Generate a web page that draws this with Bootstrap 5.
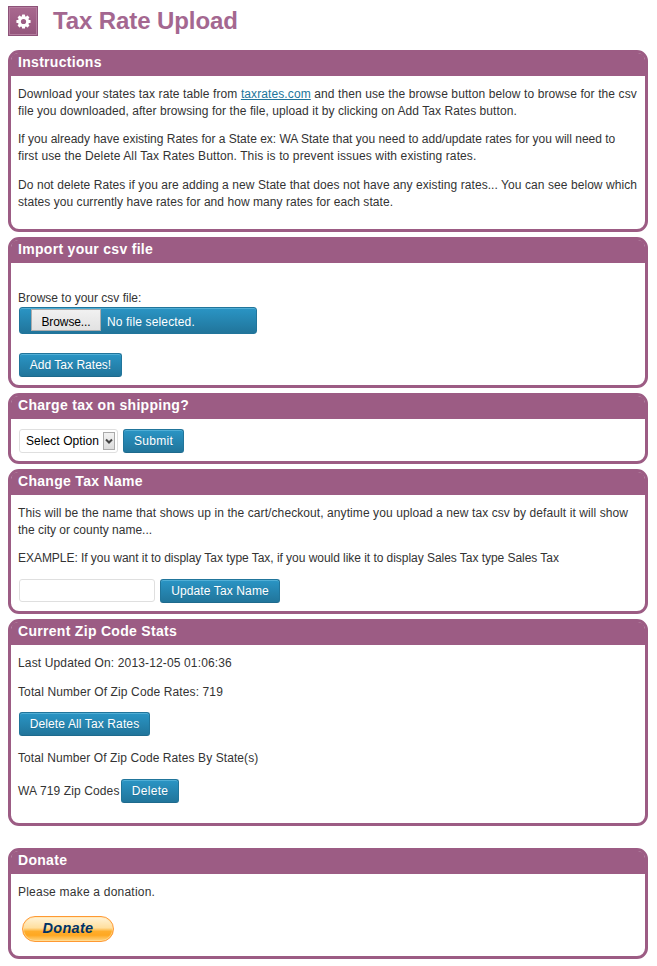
<!DOCTYPE html>
<html lang="en">
<head>
<meta charset="utf-8">
<title>Tax Rate Upload</title>
<link href="https://cdn.jsdelivr.net/npm/bootstrap@5.3.0/dist/css/bootstrap.min.css" rel="stylesheet">
<style>
body{font:12px/16.8px "Liberation Sans",Arial,sans-serif;color:#333;background:#fff}
.page-wrap{width:640px;margin-left:8px;padding-top:6px}
.title-bar{height:44px}
.gear-box{width:30px;height:30px;background:linear-gradient(#a9698f,#94557c);border:1px solid #8d5278;box-shadow:inset 0 0 0 1px #b57d9f}
.page-title{font-size:24px;line-height:30px;color:#a46790;font-weight:700;margin-left:15px;letter-spacing:-.1px}
.panel{border:3px solid #9c5c84;border-radius:11px;margin-bottom:5px;background:#fff}
.panel-title{background:#9c5c84;border-radius:7px 7px 0 0;color:#fff;font-size:14px;font-weight:700;line-height:17px;height:23px;margin:0;padding:1px 7px 0;letter-spacing:.3px}
.panel-content{padding:9.9px 0 0 7px}
.panel-content p{margin:0 0 12px;white-space:nowrap}
.panel-content a{color:#21759b}
.h-instructions{height:182px}.h-import{height:151px}.h-shipping{height:71px}.h-name{height:145px}.h-stats{height:207px;margin-bottom:22px}.h-donate{height:111px}
.ls-5{letter-spacing:.05px}.ls-7{letter-spacing:.07px}.ls-8{letter-spacing:.085px}.ls-10{letter-spacing:.1px}.ls-12{letter-spacing:.12px}.ls-14{letter-spacing:.14px}.ls-22{letter-spacing:.22px}.ls-tight{letter-spacing:-.043px}
.ms-px{margin-left:1px}
.btn-wp{height:24px;padding:0;font-size:12px;line-height:22px;letter-spacing:.12px;color:#fff;text-shadow:0 1px 0 rgba(0,0,0,.1);background:linear-gradient(#2a95c5,#21759b);border:1px solid #21759b;border-bottom-color:#1e6a8d;border-radius:3px;box-shadow:inset 0 1px 0 rgba(120,200,230,.5);white-space:nowrap}
.btn-wp:hover{color:#fff;border-color:#21759b}
.w-add{width:103px;letter-spacing:.02px}.w-submit{width:61px;letter-spacing:.3px}.w-update{width:120px}.w-all{width:131px}.w-delete{width:58px;letter-spacing:.3px}
.import-label{padding-top:27px;height:43px}
.file-box{width:238px;height:27px;margin:1px 0 19px 1px;padding-left:11px;color:#fff;background:linear-gradient(#2a95c5,#21759b);border:1px solid #21759b;border-radius:3px;box-shadow:inset 0 1px 0 rgba(120,200,230,.5)}
.file-btn{width:70px;height:22px;line-height:24px;text-align:center;color:#000;background:linear-gradient(#f1f1f1,#e2e2e2);border:1px solid #acacac;margin-top:-1px;letter-spacing:-.1px}
.file-name{margin:4px 0 0 6px;letter-spacing:.15px}
.pick{width:99px;height:24px;border:1px solid #dfdfdf;border-radius:3px;color:#000;line-height:22px;padding:0 2px 0 6px;margin-right:5px;letter-spacing:.07px;white-space:nowrap}
.pick-arrow{width:12px;height:18px;border:1px solid #aaa;background:linear-gradient(#f2f2f2,#dcdcdc)}
.name-input{width:136px;height:23px;border:1px solid #dfdfdf;border-radius:3px;margin-right:5px;padding:0 4px}
.name-row{margin-top:-.3px}
.total-line{padding-top:14px}
.state-row{margin-top:-.7px}
.state-name{width:103px;padding-top:1px}
.btn-donate{display:block;width:92px;height:26px;border:1px solid #f93;border-radius:13px;background:linear-gradient(#fff3d8 0,#ffdf9f 45%,#ffad2b 60%,#ffa822 76%,#ffd583 100%);box-shadow:inset 0 0 0 1px rgba(255,226,165,.6);color:#036;font-size:14.5px;font-weight:700;font-style:italic;line-height:23px;letter-spacing:.3px;padding:0;margin:15.3px 0 0 4px}
</style>
<script src="https://cdn.jsdelivr.net/npm/bootstrap@5.3.0/dist/js/bootstrap.bundle.min.js"></script>
</head>
<body>
<main class="page-wrap">
  <header class="title-bar d-flex align-items-start">
    <div class="gear-box d-flex align-items-center justify-content-center">
      <svg width="15" height="15" viewBox="-7.2 -7.2 14.4 14.4"><g fill="#fff"><circle r="5.3"/><g id="teeth"><rect x="-1.5" y="-6.8" width="3" height="13.6" rx=".6"/><rect x="-6.8" y="-1.5" width="13.6" height="3" rx=".6"/></g><use href="#teeth" transform="rotate(45)"/></g><circle r="2.5" fill="#9d5d85"/></svg>
    </div>
    <h1 class="page-title mb-0">Tax Rate Upload</h1>
  </header>

  <section class="panel h-instructions">
    <h2 class="panel-title">Instructions</h2>
    <div class="panel-content">
      <p><span class="ls-10">Download your states tax rate table from <a href="#">taxrates.com</a> and then use the browse button below to browse for the csv</span><br><span class="ls-7">file you downloaded, after browsing for the file, upload it by clicking on Add Tax Rates button.</span></p>
      <p>If you already have existing Rates for a State ex: WA State that you need to add/update rates for you will need to<br><span class="ls-12">first use the Delete All Tax Rates Button. This is to prevent issues with existing rates.</span></p>
      <p><span class="ls-7">Do not delete Rates if you are adding a new State that does not have any existing rates... You can see below which</span><br><span class="ls-5">states you currently have rates for and how many rates for each state.</span></p>
    </div>
  </section>

  <section class="panel h-import">
    <h2 class="panel-title">Import your csv file</h2>
    <div class="panel-content pt-0">
      <div class="import-label">Browse to your csv file:</div>
      <div class="file-box d-flex align-items-center"><span class="file-btn">Browse...</span><span class="file-name">No file selected.</span></div>
      <button class="btn btn-wp w-add d-block ms-px">Add Tax Rates!</button>
    </div>
  </section>

  <section class="panel h-shipping">
    <h2 class="panel-title">Charge tax on shipping?</h2>
    <div class="panel-content d-flex">
      <div class="pick ms-px d-flex align-items-center justify-content-between">Select Option<span class="pick-arrow d-flex align-items-center justify-content-center"><svg width="8" height="8" viewBox="0 0 8 8"><path d="M1 2.5l3 3 3-3" fill="none" stroke="#444" stroke-width="2"/></svg></span></div>
      <button class="btn btn-wp w-submit">Submit</button>
    </div>
  </section>

  <section class="panel h-name">
    <h2 class="panel-title">Change Tax Name</h2>
    <div class="panel-content">
      <p><span class="ls-8">This will be the name that shows up in the cart/checkout, anytime you upload a new tax csv by default it will show</span><br>the city or county name...</p>
      <p class="ls-tight">EXAMPLE: If you want it to display Tax type Tax, if you would like it to display Sales Tax type Sales Tax</p>
      <div class="d-flex name-row"><input class="name-input ms-px" aria-label="Tax name"><button class="btn btn-wp w-update">Update Tax Name</button></div>
    </div>
  </section>

  <section class="panel h-stats">
    <h2 class="panel-title">Current Zip Code Stats</h2>
    <div class="panel-content">
      <p class="ls-14">Last Updated On: 2013-12-05 01:06:36</p>
      <p class="ls-12">Total Number Of Zip Code Rates: 719</p>
      <button class="btn btn-wp w-all d-block ms-px">Delete All Tax Rates</button>
      <p class="ls-8 total-line">Total Number Of Zip Code Rates By State(s)</p>
      <div class="d-flex align-items-center state-row"><span class="ls-12 state-name">WA 719 Zip Codes</span><button class="btn btn-wp w-delete">Delete</button></div>
    </div>
  </section>

  <section class="panel h-donate mb-0">
    <h2 class="panel-title">Donate</h2>
    <div class="panel-content">
      <p class="ls-22">Please make a donation.</p>
      <button class="btn btn-donate">Donate</button>
    </div>
  </section>
</main>
</body>
</html>
